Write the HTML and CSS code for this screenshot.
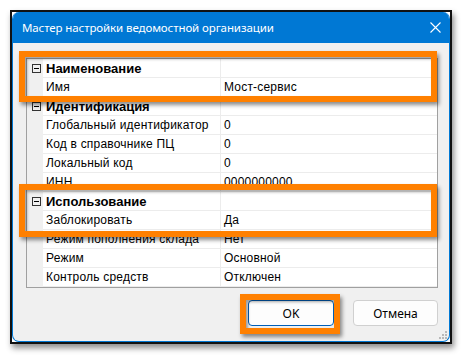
FILE: index.html
```html
<!DOCTYPE html>
<html lang="ru">
<head>
    <meta charset="UTF-8">
    <title>Мастер настройки ведомостной организации</title>
    <link rel="stylesheet" href="styles.css">
</head>
<body>
    <div class="frame">
        <div class="window">
            <div class="titlebar">
                <span class="title">Мастер настройки ведомостной организации</span>
                <svg class="close" width="11" height="11" viewBox="0 0 11 11">
                    <path d="M0.5 0.5 L10.5 10.5 M10.5 0.5 L0.5 10.5" stroke="#fff" stroke-width="1.1" fill="none"/>
                </svg>
            </div>
            <div class="content">
                <div class="grid">
                    <div class="row category"><span class="gutter"><i class="toggle"></i></span><span class="name">Наименование</span><span class="value"></span></div>
                    <div class="row"><span class="gutter"></span><span class="name">Имя</span><span class="value">Мост-сервис</span></div>
                    <div class="row category"><span class="gutter"><i class="toggle"></i></span><span class="name">Идентификация</span><span class="value"></span></div>
                    <div class="row"><span class="gutter"></span><span class="name">Глобальный идентификатор</span><span class="value">0</span></div>
                    <div class="row"><span class="gutter"></span><span class="name">Код в справочнике ПЦ</span><span class="value">0</span></div>
                    <div class="row"><span class="gutter"></span><span class="name">Локальный код</span><span class="value">0</span></div>
                    <div class="row"><span class="gutter"></span><span class="name">ИНН</span><span class="value">0000000000</span></div>
                    <div class="row category"><span class="gutter"><i class="toggle"></i></span><span class="name">Использование</span><span class="value"></span></div>
                    <div class="row"><span class="gutter"></span><span class="name">Заблокировать</span><span class="value">Да</span></div>
                    <div class="row"><span class="gutter"></span><span class="name">Режим пополнения склада</span><span class="value">Нет</span></div>
                    <div class="row"><span class="gutter"></span><span class="name">Режим</span><span class="value">Основной</span></div>
                    <div class="row"><span class="gutter"></span><span class="name">Контроль средств</span><span class="value">Отключен</span></div>
                </div>
                <div class="buttons">
                    <button class="btn default">OK</button>
                    <button class="btn">Отмена</button>
                </div>
                <svg class="grip" width="8" height="8" viewBox="0 0 8 8">
                    <rect x="6" y="0" width="2" height="2" fill="#b8b8b8"/>
                    <rect x="3" y="3" width="2" height="2" fill="#b8b8b8"/>
                    <rect x="6" y="3" width="2" height="2" fill="#b8b8b8"/>
                    <rect x="0" y="6" width="2" height="2" fill="#b8b8b8"/>
                    <rect x="3" y="6" width="2" height="2" fill="#b8b8b8"/>
                    <rect x="6" y="6" width="2" height="2" fill="#b8b8b8"/>
                </svg>
            </div>
        </div>
        <!-- выделения поверх окна -->
        <div class="mark mark-name"></div>
        <div class="mark mark-usage"></div>
        <div class="mark mark-ok"></div>
    </div>
</body>
</html>
```
FILE: styles.css
```css
* {
    margin: 0;
    padding: 0;
    box-sizing: border-box;
}

body {
    background: #fff;
    font-family: 'Liberation Sans', Arial, sans-serif;
    width: 465px;
    height: 356px;
    padding: 10px 0 0 10px;
    overflow: hidden;
}

.frame {
    position: relative;
    width: 442px;
    height: 334px;
    border: 2px solid #111;
    background: #fff;
    box-shadow: 2px 4px 6px rgba(0, 0, 0, 0.45);
}

.window {
    width: 438px;
    height: 330px;
    border: 1px solid #0078d4;
    border-top: none;
    border-radius: 7px 7px 7px 7px;
    overflow: hidden;
    background: #f0f0f0;
    display: flex;
    flex-direction: column;
}

.titlebar {
    height: 31px;
    flex: none;
    background: #0078d4;
    display: flex;
    align-items: center;
    justify-content: space-between;
    padding: 0 8px 0 9px;
}

.title {
    color: #fff;
    font-family: 'Noto Sans', sans-serif;
    font-size: 11.5px;
    letter-spacing: -0.1px;
}

.close {
    display: block;
    margin-top: -1px;
}

.content {
    position: relative;
    flex: 1;
    padding: 15px 11px 0 13px;
}

.grid {
    background: #fff;
    border: 1px solid #a0a0a0;
    height: 230px;
}

.row {
    display: flex;
    height: 19px;
    font-size: 12px;
    letter-spacing: 0.2px;
    color: #000;
}

.gutter {
    width: 16px;
    flex: none;
    background: #f0f0f0;
    display: flex;
    align-items: center;
    justify-content: center;
}

.name {
    width: 178px;
    flex: none;
    padding-left: 3px;
    line-height: 19px;
    border-bottom: 1px solid #ececec;
    border-right: 1px solid #ececec;
    white-space: nowrap;
    overflow: hidden;
}

.value {
    flex: 1;
    padding-left: 3px;
    line-height: 19px;
    border-bottom: 1px solid #ececec;
    white-space: nowrap;
    overflow: hidden;
}

.category .name {
    font-weight: bold;
    font-size: 13px;
    letter-spacing: 0;
}

.toggle {
    position: relative;
    display: block;
    width: 9px;
    height: 9px;
    border: 1px solid #333;
    margin-left: 2px;
}

.toggle::after {
    content: "";
    position: absolute;
    left: 1px;
    top: 3px;
    width: 5px;
    height: 1px;
    background: #000;
}

.buttons {
    display: flex;
    justify-content: flex-end;
    gap: 19px;
    margin-top: 12px;
}

.btn {
    height: 26px;
    width: 85px;
    background: #fdfdfd;
    border: 1px solid #d0d0d0;
    border-radius: 4px;
    font-family: 'Noto Sans', sans-serif;
    font-size: 12px;
    color: #000;
}

.btn.default {
    width: 86px;
    border-color: #005fb8;
}

.grip {
    position: absolute;
    right: 2px;
    bottom: 2px;
}

.mark {
    position: absolute;
    border: 6px solid #ff8000;
    box-shadow: 2px 3px 4px rgba(0, 0, 0, 0.45), inset 2px 2px 3px rgba(0, 0, 0, 0.35);
}

.mark-name {
    left: 7px;
    top: 39px;
    width: 418px;
    height: 51px;
}

.mark-usage {
    left: 7px;
    top: 172px;
    width: 418px;
    height: 53px;
}

.mark-ok {
    left: 228px;
    top: 282px;
    width: 100px;
    height: 40px;
}
```
